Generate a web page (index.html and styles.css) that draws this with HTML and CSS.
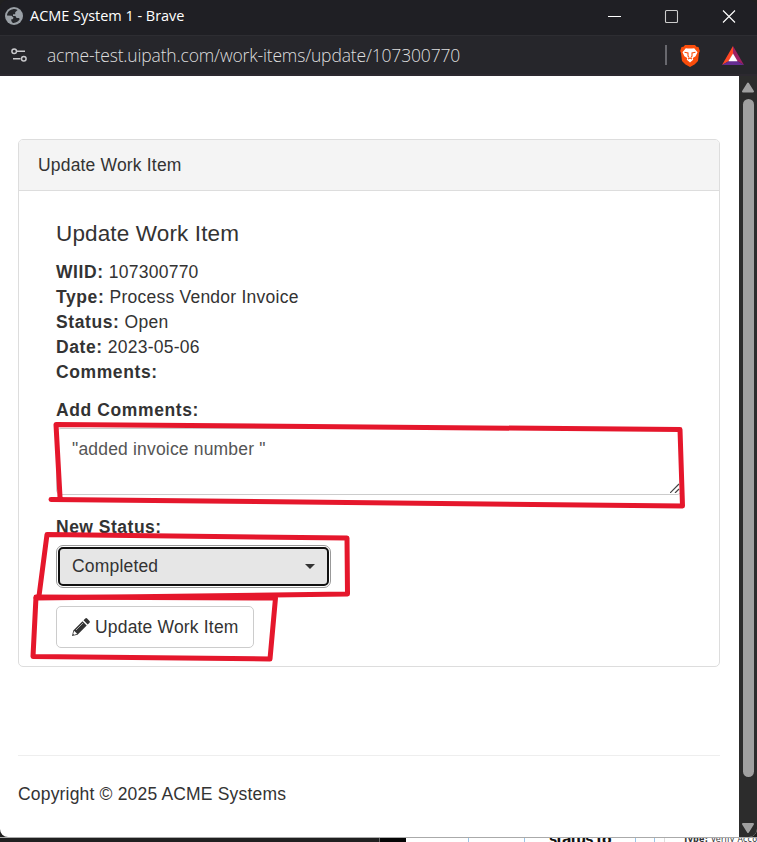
FILE: index.html
```html
<!DOCTYPE html>
<html lang="en">
<head>
<meta charset="utf-8">
<title>ACME System 1</title>
<link rel="stylesheet" href="styles.css">
</head>
<body>
<div class="window">
  <header class="titlebar">
    <svg class="globe" viewBox="0 0 18 18"><circle cx="9" cy="9" r="9" fill="#9aa0a6"/><path d="M8 2.200C4.600 2.600 2.200 5.200 2 8.500l4.600.2 2 2-.9 1.500H6.300v1.800l1.500 1.900c2.800.4 5.800-1.300 7-3.800l-1-1.100h-2.200L10.400 9H8V7.300h2.200V5.200L12.600 3.100C11 2.100 9.500 2 8 2.200Z" fill="#25262a"/></svg>
    <span class="title">ACME System 1 - Brave</span>
    <svg class="controls" viewBox="0 0 130 16" fill="none" stroke="#fff" stroke-width="1.100"><path d="M0 8.500h13"/><rect x="57.500" y="2.500" width="12" height="12" rx="1" stroke="#ccc"/><path d="M115 2.500l12 12m0-12l-12 12"/></svg>
  </header>
  <div class="addressbar">
    <svg class="tune" viewBox="0 0 16 16" fill="none" stroke="#c9c9cc" stroke-width="1.500"><circle cx="3.200" cy="4.200" r="2.300"/><path d="M6 4.200h8M2 11.800h7.500"/><circle cx="12.800" cy="11.800" r="2.300"/></svg>
    <span class="url">acme-test.uipath.com/work-items/update/107300770</span>
    <span class="divider"></span>
    <svg class="brave" viewBox="0 0 20 23"><path d="M5 1h10l1.500 1.800L18.500 3l1.300 4-.8 2-1 8-3.500 3.500L10 23l-4.500-2.500L2 17 1 9 .2 7l1.300-4 2-.2Z" fill="#fb4d0b"/><path d="M5.800 4.200 8 4.600h4l2.200-.4 3.300 4-1.900 4-2.800 1.800.4 1.800-3.200 2.700-3.200-2.700.4-1.800-2.800-1.800-1.900-4Z" fill="#fff"/><path d="M4.500 8.200 8 9v3l1 1.500M15.500 8.200 12 9v3l-1 1.500M8 15l2-.9 2 .9" fill="none" stroke="#fb4d0b" stroke-width="1.100"/></svg>
    <svg class="bat" viewBox="0 0 22 19"><path d="M11 0 0 19l7-4 4-7Z" fill="#ff4724"/><path d="m11 0 11 19-7-4-4-7Z" fill="#9e1f63"/><path d="M0 19h22l-7-4H7Z" fill="#662d91"/><path d="m11 7.500 4.600 7.800H6.400Z" fill="#fff"/></svg>
  </div>
  <div class="viewport">
    <main class="page">
      <section class="panel">
        <div class="panel-heading">Update Work Item</div>
        <div class="panel-body">
          <h4>Update Work Item</h4>
          <p class="details"><b>WIID:</b> 107300770<br><b>Type:</b> Process Vendor Invoice<br><b>Status:</b> Open<br><b>Date:</b> 2023-05-06<br><b>Comments:</b></p>
          <div class="label">Add Comments:</div>
          <div class="comments">"added invoice number "<svg class="grip" viewBox="0 0 10 10" stroke="#444" stroke-width="1.200"><path d="M0 10 9 1M5 10l4-4"/></svg></div>
          <div class="label status">New Status:</div>
          <div class="select"><span>Completed</span><i class="caret"></i></div>
          <div class="button"><svg class="pencil" viewBox="0 0 18 18"><path d="M0 18 1.300 12.500 10.500 3.300l4.200 4.200L5.500 16.700ZM11.500 2.300 13.300.5q.9-.8 1.800 0l2.400 2.400q.8.9 0 1.800l-1.800 1.800Z" fill="#333"/><path d="m2.300 13.200 2.500 2.500-2.800.7-.5-.5ZM4 12l7-7" fill="#fff" stroke="#fff" stroke-width=".6"/></svg><span>Update Work Item</span></div>
        </div>
      </section>
      <footer>Copyright © 2025 ACME Systems</footer>
    </main>
    <aside class="scrollbar">
      <svg viewBox="0 0 14 12"><path d="M7 1.500 12 9.500H2Z" fill="#a0a0a0" stroke="#a0a0a0" stroke-width="2" stroke-linejoin="round"/></svg>
      <div class="thumb"></div>
      <svg viewBox="0 0 14 12"><path d="M7 10 12 2H2Z" fill="#a0a0a0" stroke="#a0a0a0" stroke-width="2" stroke-linejoin="round"/></svg>
    </aside>
  </div>
</div>
<div class="behind">
  <div class="dark"></div><div class="black"></div>
  <div class="cell c1"></div><div class="cell c2"></div><div class="cell c3"><span class="peek">status to</span></div><div class="cell c4"></div><div class="cell c5"></div>
  <div class="last"><span class="tiny"><b>Type:</b> Verify Account</span></div>
</div>
<svg class="marks" viewBox="0 0 757 842" fill="none" stroke="#e5172c" stroke-width="5" stroke-linejoin="round" stroke-linecap="round">
  <path d="M60 497 56 424.500 680 429.500 682.500 506 51 499.500"/>
  <path d="M39 596 47 534.500 347 538 347.500 594 36 598Z"/>
  <path d="M36 597 33 656.500 270 659 275.500 598Z"/>
</svg>
</body>
</html>
```
FILE: styles.css
```css
* { box-sizing: border-box; }
body { margin: 0; width: 757px; height: 842px; overflow: hidden; background: #202020; position: relative; color: #333; font: 17.5px/25px "Liberation Sans", Arial, sans-serif; letter-spacing: .18px; }
svg { display: block; flex: none; }
b, .label { font-weight: 700; letter-spacing: .6px; }
.window { height: 837px; background: #202024; border-radius: 8px; overflow: hidden; }
.titlebar { height: 35px; display: flex; align-items: center; padding: 0 22px 3px 5px; background: #1f1f24; color: #fff; }
.globe { width: 18px; height: 18px; }
.title { margin-left: 7px; font: 14.5px/20px "Open Sans", sans-serif; letter-spacing: -.03px; white-space: nowrap; }
.controls { width: 130px; height: 16px; margin-left: auto; margin-right: -3px; }
.addressbar { height: 41px; display: flex; align-items: center; padding: 0 13px 0 11px; background: #26262b; border-top: 1px solid #2d2d32; border-bottom: 2px solid #2c2930; }
.tune { width: 16px; height: 16px; }
.url { margin: -1px 0 0 20px; font: 300 17.5px/24px "Open Sans", sans-serif; letter-spacing: -.16px; color: #dededf; white-space: nowrap; }
.divider { width: 2px; height: 20px; background: #68686e; margin-left: auto; }
.brave { width: 20px; height: 23px; margin-left: 13px; }
.bat { width: 22px; height: 19px; margin-left: 22px; }
.viewport { height: 761px; display: flex; background: #fff; }
.page { flex: 1; padding: 63px 19px 0 18px; }
.panel { width: 702px; height: 528px; border: 1px solid #ddd; border-radius: 5px; }
.panel-heading { height: 51px; padding: 13px 19px 0; background: #f4f4f4; border-bottom: 1px solid #ddd; border-radius: 4px 4px 0 0; }
.panel-body { padding: 30px 37px 0; }
h4 { margin: 0 0 13px; font-size: 22.5px; line-height: 26px; font-weight: 400; letter-spacing: .14px; }
.details { margin: 0 0 13px; letter-spacing: .24px; }
.comments { position: relative; height: 67px; margin-top: 5px; padding: 8px 15px; border: 1px solid #ccc; border-radius: 5px; color: #555; }
.grip { position: absolute; right: 1px; bottom: 1px; width: 10px; height: 10px; }
.status { margin-top: 20px; letter-spacing: .5px; }
.select { display: flex; align-items: center; justify-content: space-between; width: 271px; height: 39px; margin: 7px 0 0 2px; padding: 0 12px; background: #e6e6e6; border: 2px solid #111; border-radius: 5px; outline: 1px solid #999; outline-offset: 1px; }
.caret { border: 5px solid transparent; border-top-color: #333; border-bottom: 0; }
.button { display: flex; align-items: center; gap: 5px; width: 198px; height: 42px; margin-top: 20px; padding: 0 15px; border: 1px solid #ccc; border-radius: 5px; white-space: nowrap; }
.pencil { width: 18px; height: 18px; }
footer { width: 702px; margin-top: 88px; padding-top: 26px; border-top: 1px solid #eee; }
.scrollbar { width: 18px; padding: 6px 2px 3px; background: #2c2c2c; display: flex; flex-direction: column; align-items: center; }
.scrollbar svg { width: 14px; height: 12px; }
.thumb { width: 11px; height: 678px; margin: 5px 0 auto; border-radius: 6px; background: #a0a0a0; }
.behind { height: 5px; display: flex; overflow: hidden; background: #fff; border-top: 1px solid #aaa; }
.dark { width: 380px; background: #202020; border-right: 1px solid #666; }
.black { width: 26px; background: #050505; }
.cell { border-right: 1px solid #9bc4e8; }
.c1 { width: 63px; } .c2 { width: 56px; } .c3 { width: 111px; padding-left: 24px; } .c4 { width: 19px; } .c5 { width: 10px; border-color: #ddd; }
.peek { display: block; margin-top: -6px; font: bold 14px/14px "DejaVu Sans", sans-serif; letter-spacing: -1px; color: #111; white-space: nowrap; }
.last { flex: 1; padding-left: 18px; overflow: hidden; }
.tiny { display: block; margin-top: -3px; font: 8px/9px "DejaVu Sans", sans-serif; letter-spacing: .2px; color: #333; white-space: nowrap; }
.tiny b { letter-spacing: .2px; }
.marks { position: absolute; left: 0; top: 0; width: 757px; height: 842px; }
```
